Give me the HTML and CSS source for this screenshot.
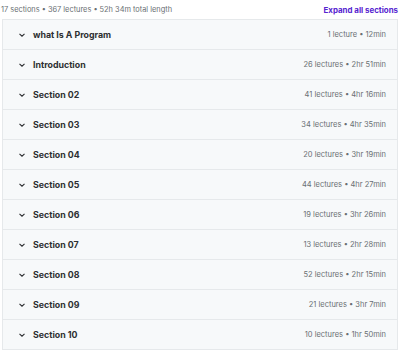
FILE: index.html
```html
<!DOCTYPE html>
<html lang="en">
<head>
    <meta charset="UTF-8">
    <meta name="viewport" content="width=device-width, initial-scale=1.0">
    <title>Course content</title>
    <link rel="stylesheet" href="styles.css">
</head>
<body>
    <div class="curriculum">
        <div class="summary">
            <span>17 sections • 367 lectures • 52h 34m total length</span>
            <button class="expand-btn">Expand all sections</button>
        </div>

        <div class="sections">
            <div class="section">
                <span class="chevron"><svg viewBox="0 0 10 10"><path d="M2.5 3.8 L5 6.2 L7.5 3.8"/></svg></span>
                <span class="title">what Is A Program</span>
                <span class="meta">1 lecture • 12min</span>
            </div>
            <div class="section">
                <span class="chevron"><svg viewBox="0 0 10 10"><path d="M2.5 3.8 L5 6.2 L7.5 3.8"/></svg></span>
                <span class="title">Introduction</span>
                <span class="meta">26 lectures • 2hr 51min</span>
            </div>
            <div class="section">
                <span class="chevron"><svg viewBox="0 0 10 10"><path d="M2.5 3.8 L5 6.2 L7.5 3.8"/></svg></span>
                <span class="title">Section 02</span>
                <span class="meta">41 lectures • 4hr 16min</span>
            </div>
            <div class="section">
                <span class="chevron"><svg viewBox="0 0 10 10"><path d="M2.5 3.8 L5 6.2 L7.5 3.8"/></svg></span>
                <span class="title">Section 03</span>
                <span class="meta">34 lectures • 4hr 35min</span>
            </div>
            <div class="section">
                <span class="chevron"><svg viewBox="0 0 10 10"><path d="M2.5 3.8 L5 6.2 L7.5 3.8"/></svg></span>
                <span class="title">Section 04</span>
                <span class="meta">20 lectures • 3hr 19min</span>
            </div>
            <div class="section">
                <span class="chevron"><svg viewBox="0 0 10 10"><path d="M2.5 3.8 L5 6.2 L7.5 3.8"/></svg></span>
                <span class="title">Section 05</span>
                <span class="meta">44 lectures • 4hr 27min</span>
            </div>
            <div class="section">
                <span class="chevron"><svg viewBox="0 0 10 10"><path d="M2.5 3.8 L5 6.2 L7.5 3.8"/></svg></span>
                <span class="title">Section 06</span>
                <span class="meta">19 lectures • 3hr 26min</span>
            </div>
            <div class="section">
                <span class="chevron"><svg viewBox="0 0 10 10"><path d="M2.5 3.8 L5 6.2 L7.5 3.8"/></svg></span>
                <span class="title">Section 07</span>
                <span class="meta">13 lectures • 2hr 28min</span>
            </div>
            <div class="section">
                <span class="chevron"><svg viewBox="0 0 10 10"><path d="M2.5 3.8 L5 6.2 L7.5 3.8"/></svg></span>
                <span class="title">Section 08</span>
                <span class="meta">52 lectures • 2hr 15min</span>
            </div>
            <div class="section">
                <span class="chevron"><svg viewBox="0 0 10 10"><path d="M2.5 3.8 L5 6.2 L7.5 3.8"/></svg></span>
                <span class="title">Section 09</span>
                <span class="meta">21 lectures • 3hr 7min</span>
            </div>
            <div class="section">
                <span class="chevron"><svg viewBox="0 0 10 10"><path d="M2.5 3.8 L5 6.2 L7.5 3.8"/></svg></span>
                <span class="title">Section 10</span>
                <span class="meta">10 lectures • 1hr 50min</span>
            </div>
        </div>
    </div>
</body>
</html>
```

FILE: styles.css
```css
body {
    margin: 0;
    background: #ffffff;
    font-family: Inter, "Noto Sans", Arial, sans-serif;
    color: #2d2f31;
}

.curriculum {
    width: 400px;
}

.summary {
    display: flex;
    justify-content: space-between;
    align-items: center;
    height: 19px;
    padding: 0 2px 0 1px;
    font-size: 7.4px;
    color: #6a6f73;
}

.expand-btn {
    padding: 0;
    border: none;
    background: none;
    font-family: inherit;
    font-size: 7.9px;
    font-weight: 700;
    color: #5624d0;
    cursor: pointer;
}

.sections {
    margin: 0 2px;
    border: 1px solid #e6e9eb;
    border-bottom: none;
}

.section {
    display: flex;
    align-items: center;
    height: 29px;
    padding: 0 11px 0 14px;
    background: #f7f9fa;
    border-bottom: 1px solid #e6e9eb;
}

.chevron {
    display: flex;
    width: 10px;
    height: 10px;
    margin-right: 6px;
}

.chevron svg {
    width: 10px;
    height: 10px;
    fill: none;
    stroke: #2d2f31;
    stroke-width: 1.1;
}

.title {
    flex: 1;
    font-size: 8.8px;
    font-weight: 700;
}

.meta {
    font-size: 7.5px;
    color: #6a6f73;
}
```
